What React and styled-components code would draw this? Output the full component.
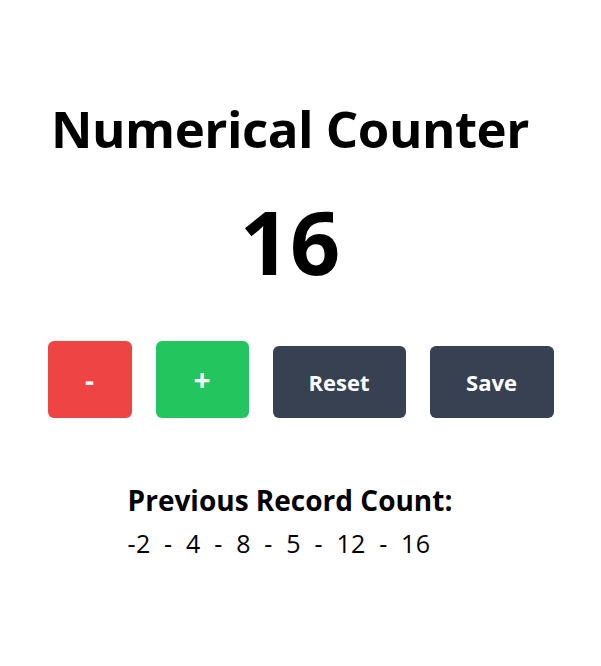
import styled, { createGlobalStyle } from "styled-components";

const GlobalStyle = createGlobalStyle`
  body {
    margin: 0;
    background: #ffffff;
    font-family: "Open Sans", "Noto Sans", sans-serif;
    color: #000000;
  }
`;

const Page = styled.div`
  width: 601px;
  min-height: 666px;
  display: flex;
  flex-direction: column;
  align-items: center;
`;

const TextColumn = styled.div`
  display: flex;
  flex-direction: column;
  align-items: center;
  padding-right: 21px;
`;

const Title = styled.h1`
  margin: 92px 0 0;
  font-size: 51px;
  font-weight: 700;
  line-height: 72px;
  letter-spacing: -0.5px;
`;

const Count = styled.div`
  margin-top: 22px;
  font-size: 88px;
  font-weight: 700;
  line-height: 110px;
`;

const ButtonRow = styled.div`
  margin-top: 45px;
  display: flex;
  align-items: flex-end;
  gap: 24px;
`;

const Button = styled.button`
  border: none;
  border-radius: 6px;
  width: ${(p) => p.$w}px;
  height: ${(p) => p.$h}px;
  background: ${(p) => p.$bg};
  color: #ffffff;
  font-family: inherit;
  font-weight: 700;
  font-size: ${(p) => p.$size || 22}px;
  display: flex;
  align-items: center;
  justify-content: center;
  padding: 0;
  cursor: pointer;
`;

const Records = styled.div`
  margin-top: 64px;
  display: flex;
  flex-direction: column;
  align-items: flex-start;
`;

const RecordTitle = styled.h2`
  margin: 0;
  font-size: 28px;
  font-weight: 700;
  line-height: 36px;
  letter-spacing: 0;
`;

const RecordList = styled.div`
  margin-top: 8px;
  font-size: 25px;
  line-height: 34px;
  white-space: pre;
  letter-spacing: 0.3px;
`;

const records = [-2, 4, 8, 5, 12, 16];

export default function App() {
  return (
    <>
      <GlobalStyle />
      <Page>
        <TextColumn>
          <Title>Numerical Counter</Title>
          <Count>16</Count>
        </TextColumn>
        <ButtonRow>
          <Button $bg="#ef4444" $w={84} $h={77} $size={28}>-</Button>
          <Button $bg="#22c55e" $w={93} $h={77} $size={30}>+</Button>
          <Button $bg="#374151" $w={133} $h={72}>Reset</Button>
          <Button $bg="#374151" $w={124} $h={72}>Save</Button>
        </ButtonRow>
        <TextColumn>
          <Records>
            <RecordTitle>Previous Record Count:</RecordTitle>
            <RecordList>{records.join("  -  ")}</RecordList>
          </Records>
        </TextColumn>
      </Page>
    </>
  );
}
